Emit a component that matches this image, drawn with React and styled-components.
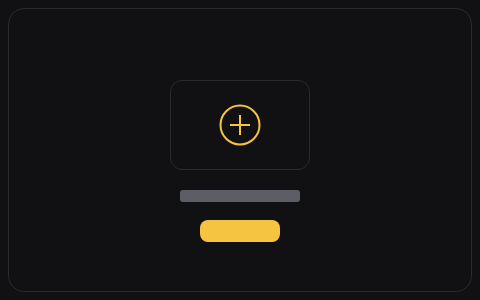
import React from "react";
import styled, { createGlobalStyle } from "styled-components";

const GlobalStyle = createGlobalStyle`
  html, body {
    margin: 0;
    background: #111113;
    font-family: "Inter", "Liberation Sans", sans-serif;
  }
  body {
    padding: 8px;
  }
`;

const Card = styled.div`
  box-sizing: border-box;
  width: 464px;
  height: 284px;
  border: 1px solid #2a2a2f;
  border-radius: 16px;
  background: #111113;
  display: flex;
  flex-direction: column;
  align-items: center;
  justify-content: center;
  padding-top: 22px;
`;

const Dropzone = styled.div`
  box-sizing: border-box;
  width: 140px;
  height: 90px;
  border: 1px solid #2a2a2f;
  border-radius: 12px;
  display: flex;
  align-items: center;
  justify-content: center;
`;

const Bar = styled.div`
  width: 120px;
  height: 12px;
  border-radius: 3px;
  background: #5d5d66;
  margin-top: 20px;
`;

const Button = styled.button`
  width: 80px;
  height: 22px;
  border: none;
  border-radius: 8px;
  background: #f5c542;
  margin-top: 18px;
  padding: 0;
  cursor: pointer;
`;

const PlusCircle = () => (
  <svg width="42" height="42" viewBox="0 0 42 42" fill="none">
    <circle cx="21" cy="21" r="19.5" stroke="#f5c542" strokeWidth="2" />
    <path d="M11 21h20M21 11v20" stroke="#f5c542" strokeWidth="2" />
  </svg>
);

export default function App() {
  return (
    <>
      <GlobalStyle />
      <Card>
        <Dropzone>
          <PlusCircle />
        </Dropzone>
        <Bar />
        <Button aria-label="Upload" />
      </Card>
    </>
  );
}
